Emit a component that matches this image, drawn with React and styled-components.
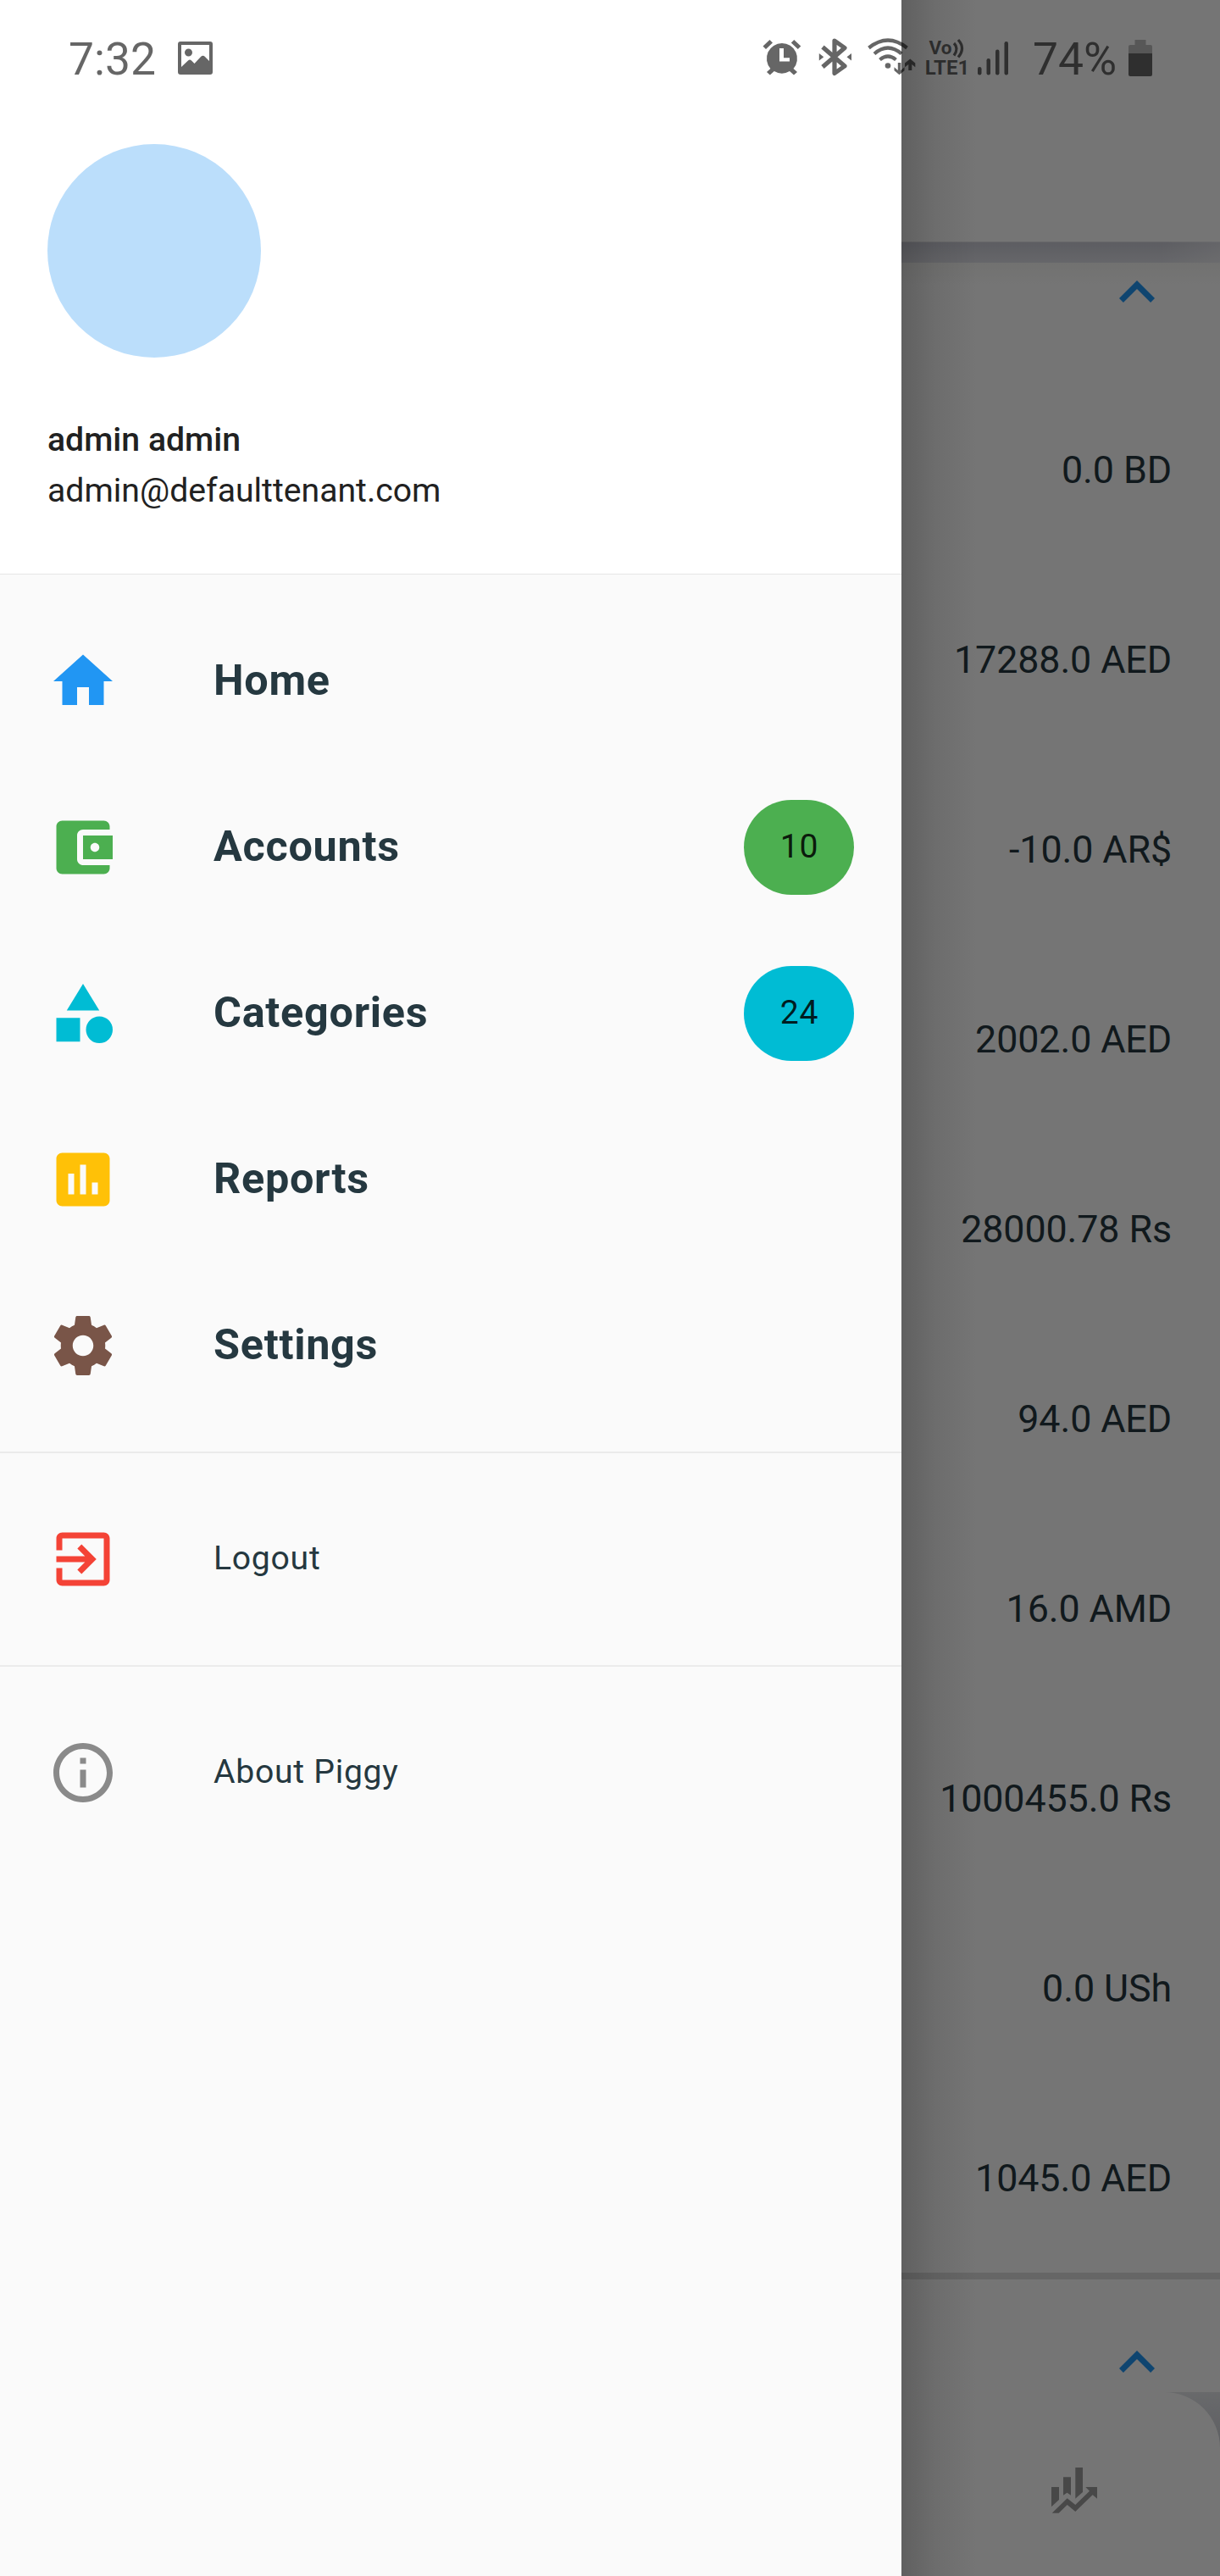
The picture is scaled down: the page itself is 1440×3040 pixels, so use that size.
import React from 'react';
import styled, { createGlobalStyle } from 'styled-components';

const Global = createGlobalStyle`
  * { box-sizing: border-box; }
  body { margin: 0; font-family: Roboto, "Noto Sans", sans-serif; background: #fff; }
  svg { display: block; flex: none; }
`;

const Screen = styled.div`
  position: relative;
  width: 1440px;
  height: 3040px;
  overflow: hidden;
`;

/* ---------- page behind the drawer ---------- */

const Page = styled.div`
  display: flex;
  flex-direction: column;
  height: 3040px;
  background: #fff;
`;

const AppBar = styled.header`
  flex: none;
  height: 285px;
  background: #fff;
`;

/* the app bar's shadow falls on the top of the list, weaker towards the edge */
const AccountList = styled.main`
  flex: 1;
  min-height: 0;
  display: flex;
  flex-direction: column;
  overflow: hidden;
  background:
    linear-gradient(to left, rgba(255, 255, 255, 0.35), rgba(255, 255, 255, 0) 70px) top / 100% 25px no-repeat,
    linear-gradient(to bottom, #e2e2e8 1px, #cacbd5 1px, #dedfe6 25px, #f7f7f5 25px, #fefefe 50px);
`;

const GroupHeader = styled.div`
  flex: none;
  display: flex;
  justify-content: flex-end;
  align-items: flex-start;
  height: ${(p) => p.$height}px;
  padding: ${(p) => p.$top}px 56px 0 0;
`;

const AmountRow = styled.div`
  flex: none;
  display: flex;
  align-items: center;
  justify-content: flex-end;
  height: 224px;
  padding: 1px 57px 0 0;
  font-size: 44.8px;
  line-height: 54px;
  letter-spacing: -0.1px;
  color: #253840;
`;

const GroupDivider = styled.div`
  flex: none;
  height: 8px;
  background: #dedede;
`;

const BottomWrap = styled.div`
  flex: none;
  height: 217px;
  background: linear-gradient(to bottom, #e4e6ea, #cdcfd6 66px);
`;

const BottomBar = styled.nav`
  display: flex;
  align-items: center;
  justify-content: flex-end;
  height: 217px;
  padding: 15px 144px 0 0;
  border-radius: 0 66px 0 0;
  background: #fff;
`;

const Scrim = styled.div`
  position: absolute;
  inset: 0;
  background: rgba(0, 0, 0, 0.54);
`;

/* ---------- drawer ---------- */

const Drawer = styled.aside`
  position: absolute;
  left: 0;
  top: 0;
  width: 1064px;
  height: 3040px;
  display: flex;
  flex-direction: column;
  background: #fafafa;

  &::after {
    content: '';
    position: absolute;
    left: 100%;
    top: 0;
    width: 90px;
    height: 100%;
    background: linear-gradient(to right, rgba(0, 0, 0, 0.18), rgba(0, 0, 0, 0.07) 45%, rgba(0, 0, 0, 0));
  }
`;

const DrawerHeader = styled.div`
  flex: none;
  height: 678px;
  padding: 170px 56px 0;
  background: #fff;
  border-bottom: 1px solid #e6e6e6;
  margin-bottom: 28px;
`;

const Avatar = styled.div`
  width: 252px;
  height: 252px;
  border-radius: 50%;
  background: #bbdefb;
`;

const UserName = styled.div`
  margin-top: 67px;
  font-size: 39.2px;
  line-height: 60px;
  font-weight: 500;
  color: #212121;
`;

const UserEmail = styled.div`
  font-size: 39.2px;
  line-height: 60px;
  color: #212121;
`;

const MenuItem = styled.div`
  flex: none;
  display: flex;
  align-items: center;
  height: 196px;
  padding: 0 56px;
`;

const Label = styled.span`
  flex: 1;
  margin-left: 112px;
  margin-top: ${(p) => (p.$strong ? -4 : -2)}px;
  font-size: ${(p) => (p.$strong ? 50.4 : 39.2)}px;
  font-weight: ${(p) => (p.$strong ? 700 : 400)};
  letter-spacing: 0.7px;
  color: #253840;
`;

const Badge = styled.span`
  display: flex;
  align-items: center;
  justify-content: center;
  width: 130px;
  height: 112px;
  padding: 0 0 2px 1px;
  border-radius: 56px;
  background: ${(p) => p.$color};
  font-size: 39.2px;
  letter-spacing: 0.7px;
  color: rgba(0, 0, 0, 0.87);
`;

const Rule = styled.div`
  flex: none;
  height: 2px;
  margin: 27px 0;
  background: #ebebeb;
`;

/* ---------- status bar ---------- */

const StatusBar = styled.div`
  position: absolute;
  inset: 0 0 auto 0;
  display: flex;
  align-items: center;
  height: 136px;
  padding-left: 81px;
  color: rgba(0, 0, 0, 0.6);
`;

const StatusText = styled.span`
  flex: none;
  width: ${(p) => p.$w}px;
  margin-top: 3px;
  font-size: 53.4px;
  line-height: 64px;
  white-space: nowrap;
`;

const SystemTray = styled.div`
  display: flex;
  margin: 4px 19px 0 649px;
`;

const Glyph = ({ d, color, size = 84 }) => (
  <svg width={size} height={size} viewBox="0 0 24 24" fill={color}>
    <path d={d} />
  </svg>
);

const ICONS = {
  home: 'M10 20v-6h4v6h5v-8h3L12 3 2 12h3v8z',
  accounts:
    'M21 18v1c0 1.1-.9 2-2 2H5c-1.11 0-2-.9-2-2V5c0-1.1.89-2 2-2h14c1.1 0 2 .9 2 2v1h-9c-1.11 0-2 .9-2 2v8c0 1.1.89 2 2 2h9zm-9-2h10V8H12v8zm4-2.5c-.83 0-1.5-.67-1.5-1.5s.67-1.5 1.5-1.5 1.5.67 1.5 1.5-.67 1.5-1.5 1.5z',
  categories:
    'M12 2l-5.5 9h11z M17.5 13a4.5 4.5 0 1 0 0 9a4.5 4.5 0 1 0 0-9z M3 13.5h8v8H3z',
  reports:
    'M19 3H5c-1.1 0-2 .9-2 2v14c0 1.1.9 2 2 2h14c1.1 0 2-.9 2-2V5c0-1.1-.9-2-2-2zM9 17H7v-7h2v7zm4 0h-2V7h2v10zm4 0h-2v-4h2v4z',
  settings:
    'M19.43 12.98c.04-.32.07-.64.07-.98s-.03-.66-.07-.98l2.11-1.65c.19-.15.24-.42.12-.64l-2-3.46c-.12-.22-.39-.3-.61-.22l-2.49 1c-.52-.4-1.08-.73-1.69-.98l-.38-2.65C14.46 2.18 14.25 2 14 2h-4c-.25 0-.46.18-.49.42l-.38 2.65c-.61.25-1.17.59-1.69.98l-2.49-1c-.23-.09-.49 0-.61.22l-2 3.46c-.13.22-.07.49.12.64l2.11 1.65c-.04.32-.07.65-.07.98s.03.66.07.98l-2.11 1.65c-.19.15-.24.42-.12.64l2 3.46c.12.22.39.3.61.22l2.49-1c.52.4 1.08.73 1.69.98l.38 2.65c.03.24.24.42.49.42h4c.25 0 .46-.18.49-.42l.38-2.65c.61-.25 1.17-.59 1.69-.98l2.49 1c.23.09.49 0 .61-.22l2-3.46c.12-.22.07-.49-.12-.64l-2.11-1.65zM12 15.5c-1.93 0-3.5-1.57-3.5-3.5s1.57-3.5 3.5-3.5 3.5 1.57 3.5 3.5-1.57 3.5-3.5 3.5z',
  logout:
    'M10.09 15.59L11.5 17l5-5-5-5-1.41 1.41L12.67 11H3v2h9.67l-2.58 2.59zM19 3H5c-1.11 0-2 .9-2 2v4h2V5h14v14H5v-4H3v4c0 1.1.89 2 2 2h14c1.1 0 2-.9 2-2V5c0-1.1-.9-2-2-2z',
  info:
    'M11 17h2v-6h-2v6zm1-15C6.48 2 2 6.48 2 12s4.48 10 10 10 10-4.48 10-10S17.52 2 12 2zm0 18c-4.41 0-8-3.59-8-8s3.59-8 8-8 8 3.59 8 8-3.59 8-8 8zM11 9h2V7h-2v2z',
  up: 'M7.41 15.41L12 10.83l4.59 4.58L18 14l-6-6-6 6z',
};

const MENU = [
  { icon: 'home', color: '#2196f3', label: 'Home' },
  { icon: 'accounts', color: '#4caf50', label: 'Accounts', count: 10 },
  { icon: 'categories', color: '#00bcd4', label: 'Categories', count: 24 },
  { icon: 'reports', color: '#ffc107', label: 'Reports' },
  { icon: 'settings', color: '#795548', label: 'Settings' },
];

const AMOUNTS = [
  '0.0 BD',
  '17288.0 AED',
  '-10.0 AR$',
  '2002.0 AED',
  '28000.78 Rs',
  '94.0 AED',
  '16.0 AMD',
  '1000455.0 Rs',
  '0.0 USh',
  '1045.0 AED',
];

const ChartIcon = () => (
  <svg width="56" height="56" viewBox="0 0 56 56" fill="#9e9e9e">
    <path d="M1 24h9v15l-9 8.300zM15 12.300h9v21.400l-4.500-3l-4.500 3zM29.300 1h8.700v29l-8.700 7.700z" />
    <path d="M1.700 54.700L19.700 37.300L29.300 45L46 28.700L41.300 24H55V37.700L49.700 33.300L29.300 53L19.700 45L9.700 54.700z" />
  </svg>
);

const PictureIcon = () => (
  <svg width="41" height="39" viewBox="0 0 41 39" fill="currentColor">
    <path
      fillRule="evenodd"
      d="M3 0h35a3 3 0 0 1 3 3v33a3 3 0 0 1-3 3H3a3 3 0 0 1-3-3V3a3 3 0 0 1 3-3zM4 4v26l8-7.500q2-2 4 0l3.500 3.500l7.500-8q2.500-2.500 5 0l5 5V4zM12.500 8.500a4.500 4.500 0 1 1 0 9a4.500 4.500 0 1 1 0-9z"
    />
  </svg>
);

/* alarm, bluetooth, wifi, VoLTE and signal, drawn on the status bar's own grid */
const SystemIcons = () => (
  <svg width="300" height="60" viewBox="0 0 300 60" fill="currentColor">
    <path
      fillRule="evenodd"
      d="M22.900 11a18 18 0 0 1 13.600 29.900l4.500 4.100l-4 3.500l-5-4.500a18 18 0 0 1-18.200 0l-5 4.500l-3.800-3.500l4.400-4.100A18 18 0 0 1 22.900 11zM20 17v15.500h12v-4.200h-7V17z"
    />
    <path d="M8.500 7l3.500 3.500l-8 7.500l-3.500-3.500zM37.300 7l-3.500 3.500l8 7.500l3.500-3.500z" />
    <g fill="none" stroke="currentColor" strokeWidth="5.200" strokeLinejoin="round">
      <path d="M71 15.500L97 38L85 46.500V8L97 16.500L71 39" />
    </g>
    <path d="M66.800 23l5.500 4.200l-5.500 4.200zM105 23v8.400l-5.500-4.200z" />
    <g fill="none" stroke="currentColor" strokeWidth="4.200">
      <path d="M125.500 16.500Q148 -1.500 170.500 16.500" />
      <path d="M132 23.500Q148 9.500 164 23.500" />
      <path d="M138.500 30.500Q148 22.500 157.500 30.500" />
    </g>
    <circle cx="148" cy="37.500" r="3.300" />
    <path d="M159.800 34v9l-4.300-3.700v4l6 5l6-5v-4l-4.100 3.700V34zM172.300 43V36l-4.300 3.200v-4.600l6.300-5l6 5v4.600L176.300 36v7z" />
    <text x="196.500" y="24" fontFamily="Roboto" fontWeight="700" fontSize="22.500" textLength="27" lengthAdjust="spacingAndGlyphs">Vo</text>
    <g fill="none" stroke="currentColor" strokeWidth="3.200">
      <path d="M226 11q6 6 0 14.500M231 7q9 10 0 20.500" />
    </g>
    <text x="191.800" y="48" fontFamily="Roboto" fontWeight="700" fontSize="24.500" textLength="52.500" lengthAdjust="spacingAndGlyphs">LTE1</text>
    <g>
      <rect x="254" y="39" width="4.500" height="9.500" rx="2.200" />
      <rect x="264.500" y="29" width="4.500" height="19.500" rx="2.200" />
      <rect x="275" y="18.500" width="4.500" height="30" rx="2.200" />
      <rect x="285.500" y="9" width="4.500" height="39.500" rx="2.200" />
    </g>
  </svg>
);

const BatteryIcon = () => (
  <svg width="28" height="43" viewBox="0 0 28 43">
    <path d="M7.500 0h13v6H26q2 0 2 2v8H0V8q0-2 2-2h5.500z" fill="#000" fillOpacity="0.250" />
    <path d="M0 16h28v25q0 2-2 2H2q-2 0-2-2z" fill="currentColor" />
  </svg>
);

export default function App() {
  return (
    <Screen>
      <Global />
      <Page>
        <AppBar />
        <AccountList>
          <GroupHeader $height={157} $top={18}>
            <Glyph d={ICONS.up} color="#2196f3" />
          </GroupHeader>
          {AMOUNTS.map((a) => (
            <AmountRow key={a}>{a}</AmountRow>
          ))}
          <GroupDivider />
          <GroupHeader $height={133} $top={56}>
            <Glyph d={ICONS.up} color="#2196f3" />
          </GroupHeader>
        </AccountList>
        <BottomWrap>
          <BottomBar>
            <ChartIcon />
          </BottomBar>
        </BottomWrap>
      </Page>
      <Scrim />
      <Drawer>
        <DrawerHeader>
          <Avatar />
          <UserName>admin admin</UserName>
          <UserEmail>admin@defaulttenant.com</UserEmail>
        </DrawerHeader>
        {MENU.map((m) => (
          <MenuItem key={m.label}>
            <Glyph d={ICONS[m.icon]} color={m.color} />
            <Label $strong>{m.label}</Label>
            {m.count && <Badge $color={m.color}>{m.count}</Badge>}
          </MenuItem>
        ))}
        <Rule />
        <MenuItem>
          <Glyph d={ICONS.logout} color="#f44336" />
          <Label>Logout</Label>
        </MenuItem>
        <Rule />
        <MenuItem>
          <Glyph d={ICONS.info} color="#8a8a8a" />
          <Label>About Piggy</Label>
        </MenuItem>
      </Drawer>
      <StatusBar>
        <StatusText $w={129}>7:32</StatusText>
        <PictureIcon />
        <SystemTray>
          <SystemIcons />
        </SystemTray>
        <StatusText $w={113}>74%</StatusText>
        <BatteryIcon />
      </StatusBar>
    </Screen>
  );
}
